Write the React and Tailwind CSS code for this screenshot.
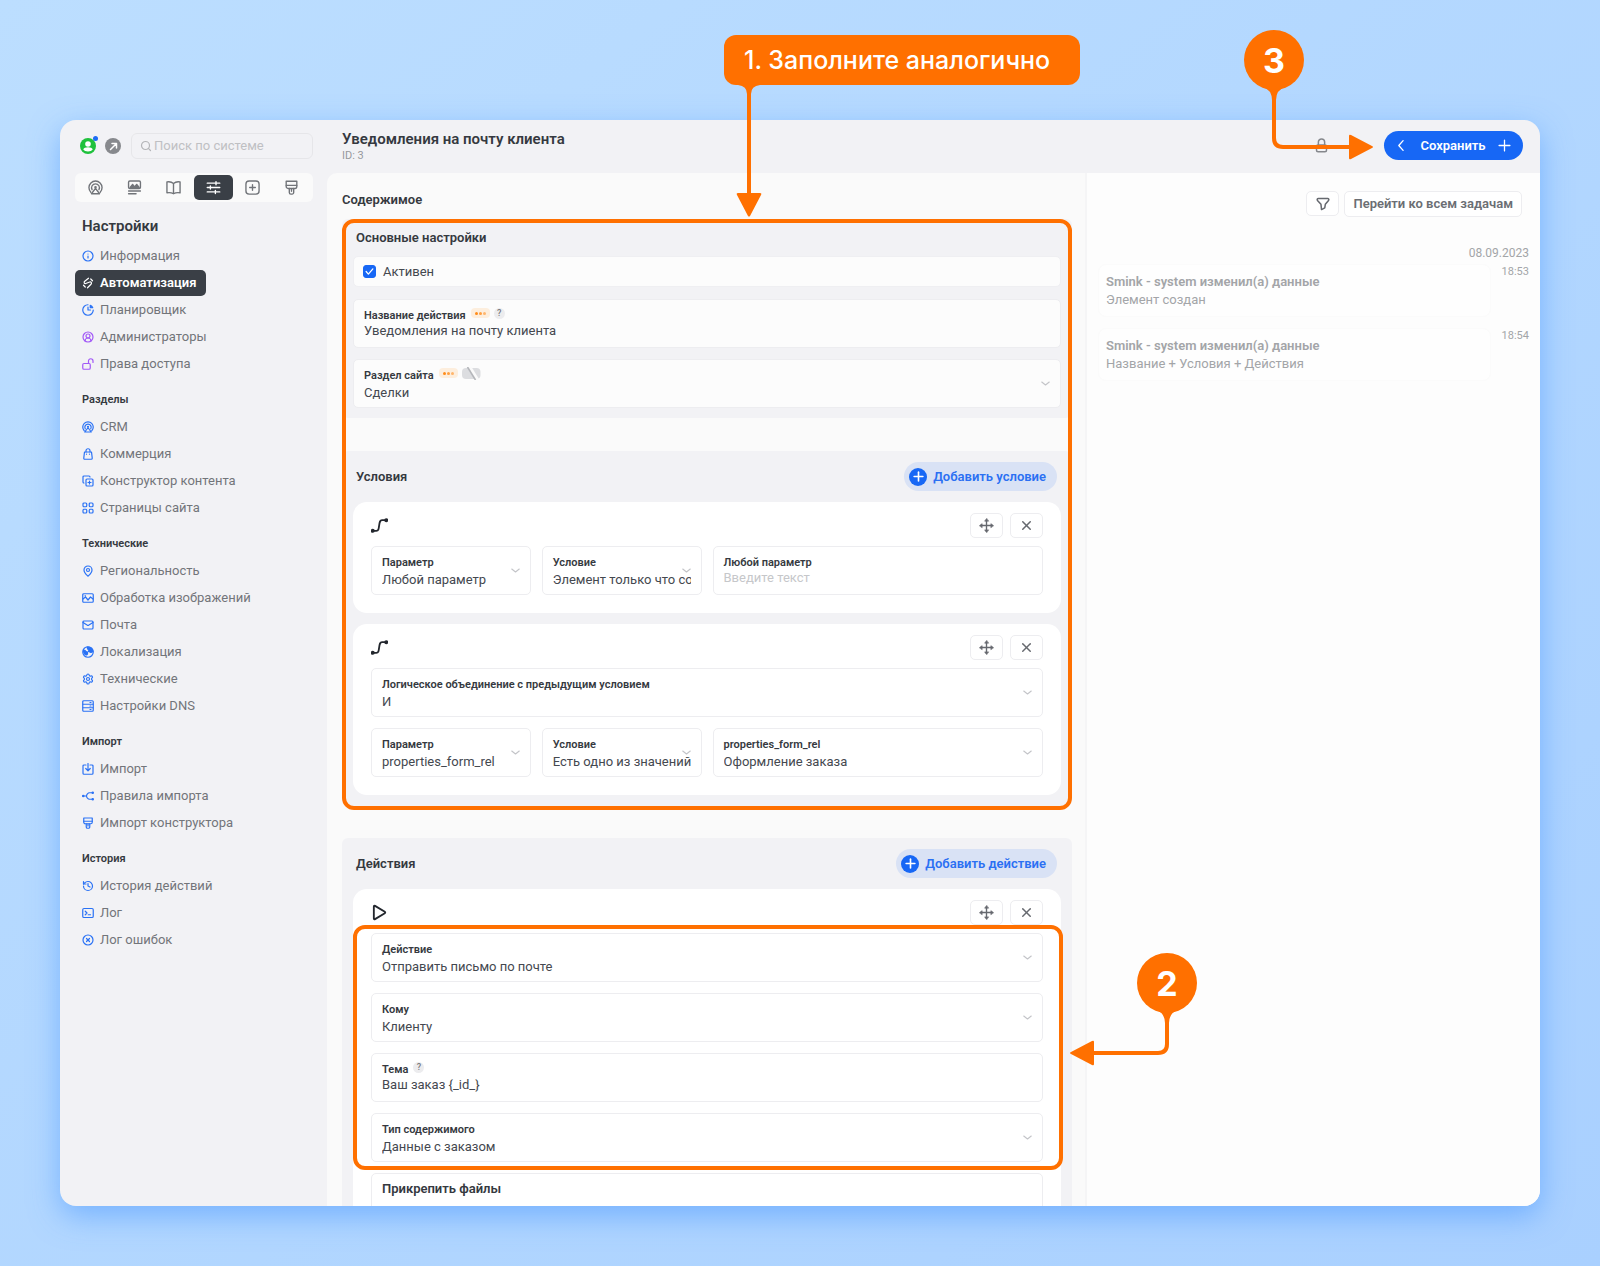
import React, { useId } from 'react';
import { CircleUserRound, CircleX, CopyPlus, History, Info, Mail, MapPin, Plus, Search, Settings, X } from 'lucide-react';

const Svg = ({ children, className = 'size-3', strokeWidth = 2.4 }) => (
  <svg
    className={className}
    viewBox="0 0 24 24"
    fill="none"
    stroke="currentColor"
    strokeWidth={strokeWidth}
    strokeLinecap="round"
    strokeLinejoin="round"
    aria-hidden="true"
  >
    {children}
  </svg>
);

const AutomationIcon = (props) => (
  <Svg {...props}>
    <path d="M13 2.500 5.500 8.500c-2.400 2-.8 5.500 2 4.500l8-3c3-1 4.600 2.500 2.500 4.500L11 21.500" />
    <path d="M3 16.500 6.500 20M17.500 4 21 7.500" />
  </Svg>
);

const PlannerIcon = (props) => (
  <Svg {...props}>
    <path d="M12 1.500A10.500 10.500 0 1 0 22.500 12M12 6v6h5" />
    <path d="M16.500 2.500a9 9 0 0 1 5 5h-5z" fill="currentColor" />
  </Svg>
);

const UnlockIcon = (props) => (
  <Svg {...props}>
    <rect x="1.500" y="11" width="15" height="11.500" rx="2.500" />
    <path d="M13 11V6a4.500 4.500 0 0 1 9 0v3" />
  </Svg>
);

const CrmIcon = (props) => (
  <Svg {...props}>
    <path d="M4.500 19.500a10.500 10.500 0 1 1 15 0" />
    <path d="M6.500 15.500a6.300 6.300 0 1 1 11 0" />
    <path d="M12 13.500 5.500 22h13z" />
    <circle cx="12" cy="11.500" r="1" />
  </Svg>
);

const BagIcon = (props) => (
  <Svg {...props}>
    <path d="M5 8h14l1.500 12.500a2 2 0 0 1-2 2h-13a2 2 0 0 1-2-2z" />
    <path d="M8 8V5.500a4 4 0 0 1 8 0V8M9 12v.5M15 12v.5" />
  </Svg>
);

const GridIcon = (props) => (
  <Svg {...props}>
    <rect x="2" y="2" width="7.500" height="7.500" rx="2" />
    <rect x="14.500" y="2" width="7.500" height="7.500" rx="2" />
    <rect x="2" y="14.500" width="7.500" height="7.500" rx="2" />
    <rect x="14.500" y="14.500" width="7.500" height="7.500" rx="2" />
  </Svg>
);

const ImageIcon = (props) => (
  <Svg {...props}>
    <rect x="1.500" y="3.500" width="21" height="17" rx="2" />
    <path d="m2 14 5-4 5 6 5-6 5 4M6 7.500h1" />
  </Svg>
);

const GlobeIcon = (props) => (
  <Svg {...props}>
    <circle cx="12" cy="12" r="10.500" />
    <path d="M3 8c3 0 4 1 5 3l3 1v4l-2 2c-4-1-6-4-6-10zM10 2c1 3 1 5 4 6l-1 3 5 2 4-2c-.5-5-5-9.500-12-9z" fill="currentColor" />
  </Svg>
);

const DnsIcon = (props) => (
  <Svg {...props}>
    <rect x="1.500" y="1.500" width="21" height="21" rx="2" />
    <path d="M2 8.500h20M2 15.500h20M16 5h2M16 12h2M16 19h2" />
  </Svg>
);

const ImportIcon = (props) => (
  <Svg {...props}>
    <path d="M8 4H4a2 2 0 0 0-2 2v14.500a2 2 0 0 0 2 2h16a2 2 0 0 0 2-2V6a2 2 0 0 0-2-2h-4" />
    <path d="M12 1v14M7.500 11l4.500 4.500 4.500-4.500" />
  </Svg>
);

const SplitIcon = (props) => (
  <Svg {...props}>
    <path d="M2 12h7M21 5.500h-6c-3 0-6 3.500-6 6.500s3 6.500 6 6.500h6" />
    <circle cx="2.500" cy="12" r="1.300" fill="currentColor" />
    <circle cx="21.500" cy="5.500" r="1.300" fill="currentColor" />
    <circle cx="21.500" cy="18.500" r="1.300" fill="currentColor" />
  </Svg>
);

const BrushIcon = (props) => (
  <Svg {...props}>
    <path d="M3.500 2h17v8.500a3 3 0 0 1-3 3h-11a3 3 0 0 1-3-3z" />
    <path d="M3.500 8.500h17M8.500 13.500V20a2.500 2.500 0 0 0 2.500 2.500h2a2.500 2.500 0 0 0 2.500-2.500v-6.500M12 14v4" />
  </Svg>
);

const TerminalIcon = (props) => (
  <Svg {...props}>
    <rect x="1.500" y="3" width="21" height="18" rx="2.500" />
    <path d="m6.500 8.500 3.500 3.500-3.500 3.500M12.500 15.500h4.500" />
  </Svg>
);

const NewsIcon = (props) => (
  <Svg {...props}>
    <rect x="2.500" y="1.500" width="19" height="12" rx="2" />
    <path d="m5 12 4-5 3 4 3.500-4 4 5z" fill="currentColor" />
    <path d="M2.500 17.500h19M2.500 22h12" />
  </Svg>
);

const BookIcon = (props) => (
  <Svg {...props}>
    <path d="M12 5.500C9 2.800 5.500 2.300 1.500 3v17.500c4-.7 7.500-.2 10.500 1.500 3-1.700 6.500-2.200 10.500-1.500V3C18.500 2.300 15 2.800 12 5.500zM12 5.500V21" />
  </Svg>
);

const SlidersIcon = (props) => (
  <Svg {...props}>
    <path d="M2 5h20M2 12h20M2 19h20M16 2.500v5M7 9.500v5M15 16.500v5" />
  </Svg>
);

const AddBoxIcon = (props) => (
  <Svg {...props}>
    <rect x="1.500" y="1.500" width="21" height="21" rx="5" />
    <path d="M12 7.500v9M7.500 12h9" />
  </Svg>
);

const LockIcon = (props) => (
  <Svg {...props}>
    <rect x="4" y="11" width="16" height="11" rx="2.500" />
    <path d="M7 11V6.500a5 5 0 0 1 10 0V11" />
  </Svg>
);

const FilterIcon = (props) => (
  <Svg {...props}>
    <path d="M4 2.500h16a2 2 0 0 1 1.500 3.300L16 12.500l-1 6-5.500 3L8.500 12.500 2.500 5.800A2 2 0 0 1 4 2.500z" />
  </Svg>
);

const MoveIcon = (props) => (
  <Svg {...props}>
    <path d="M12 3v18M3 12h18" />
    <path d="M12 1 9 5h6zM12 23l-3-4h6zM1 12l4-3v6zM23 12l-4-3v6z" fill="currentColor" strokeWidth="1" />
  </Svg>
);

const RouteIcon = (props) => (
  <Svg {...props}>
    <path d="M3 19.500h4.500c3 0 3.300-2 4-7.500s1.200-7.500 4-7.500H21" />
    <circle cx="2.500" cy="19.500" r="1.500" fill="currentColor" />
    <circle cx="21.500" cy="4.500" r="1.500" fill="currentColor" />
  </Svg>
);

const PlayIcon = (props) => (
  <Svg {...props}>
    <path d="M4 3.500v17c0 1 .8 1.400 1.700.900l13.800-8.400c.8-.5.800-1.500 0-2L5.700 2.600C4.800 2.100 4 2.500 4 3.500z" />
  </Svg>
);

const tabs = [
  { label: 'CRM', icon: CrmIcon },
  { label: 'Контент', icon: NewsIcon },
  { label: 'Справочники', icon: BookIcon },
  { label: 'Настройки', icon: SlidersIcon, active: true },
  { label: 'Добавить', icon: AddBoxIcon },
  { label: 'Оформление', icon: BrushIcon },
];

const groups = [
  {
    items: [
      { label: 'Информация', icon: Info },
      { label: 'Автоматизация', icon: AutomationIcon, active: true },
      { label: 'Планировщик', icon: PlannerIcon },
      { label: 'Администраторы', icon: CircleUserRound, purple: true },
      { label: 'Права доступа', icon: UnlockIcon, purple: true },
    ],
  },
  {
    title: 'Разделы',
    items: [
      { label: 'CRM', icon: CrmIcon },
      { label: 'Коммерция', icon: BagIcon },
      { label: 'Конструктор контента', icon: CopyPlus },
      { label: 'Страницы сайта', icon: GridIcon },
    ],
  },
  {
    title: 'Технические',
    items: [
      { label: 'Региональность', icon: MapPin },
      { label: 'Обработка изображений', icon: ImageIcon },
      { label: 'Почта', icon: Mail },
      { label: 'Локализация', icon: GlobeIcon },
      { label: 'Технические', icon: Settings },
      { label: 'Настройки DNS', icon: DnsIcon },
    ],
  },
  {
    title: 'Импорт',
    items: [
      { label: 'Импорт', icon: ImportIcon },
      { label: 'Правила импорта', icon: SplitIcon },
      { label: 'Импорт конструктора', icon: BrushIcon },
    ],
  },
  {
    title: 'История',
    items: [
      { label: 'История действий', icon: History },
      { label: 'Лог', icon: TerminalIcon },
      { label: 'Лог ошибок', icon: CircleX },
    ],
  },
];

const events = [
  { time: '18:53', title: 'Smink - system изменил(а) данные', text: 'Элемент создан' },
  { time: '18:54', title: 'Smink - system изменил(а) данные', text: 'Название + Условия + Действия' },
];

const SidebarItem = ({ label, icon: Icon, active, purple }) => (
  <li className="flex">
    <a
      href="#"
      className={
        active
          ? 'flex h-[26px] items-center gap-[6px] rounded-[5px] bg-[#3a3f46] pr-[10px] pl-[7px] text-[13px] font-semibold text-white'
          : 'flex h-[26px] items-center gap-[6px] px-[7px] text-[13px] text-[#72757a]'
      }
    >
      <span className={active ? 'text-white' : purple ? 'text-[#a259f7]' : 'text-[#2a72f5]'}>
        <Icon className="block size-3" strokeWidth={2.4} />
      </span>
      {label}
    </a>
  </li>
);

const Sidebar = () => (
  <aside className="w-[267px] shrink-0 pt-[13px] pr-[14px] pl-[15px]">
    <div className="flex items-center pl-[5px]">
      <button type="button" aria-label="Профиль" className="relative size-4 rounded-full bg-[#1fc13c] text-white">
        <svg viewBox="0 0 16 16" className="size-4" fill="currentColor" aria-hidden="true">
          <circle cx="8" cy="6" r="2.800" />
          <path d="M3.300 11.500c.5-3 8.900-3 9.400 0-1.500 2.600-7.900 2.600-9.400 0z" />
        </svg>
        <span className="absolute -top-0.5 -right-0.5 size-[5px] rounded-full bg-[#1c6cf5]" />
      </button>
      <button type="button" aria-label="Открыть сайт" className="ml-[9px] flex size-4 items-center justify-center rounded-full bg-[#87898d] text-white">
        <Svg className="size-[9px]" strokeWidth={4}>
          <path d="M4 20 20 4M8 4h12v12" />
        </Svg>
      </button>
      <label className="ml-[10px] flex h-[26px] flex-1 items-center gap-0.5 rounded-md border border-[#e6e6e9] px-2 text-[#b4b5b8]">
        <Search className="size-3 shrink-0" strokeWidth={2.4} />
        <input
          type="search"
          aria-label="Поиск по системе"
          placeholder="Поиск по системе"
          className="w-full min-w-0 bg-transparent text-[13px] outline-none placeholder:text-[#bfc0c3]"
        />
      </label>
    </div>

    <nav className="mt-[14px] grid h-[29px] grid-cols-6 rounded-md bg-[#fafafa] pl-px pr-0.5">
      {tabs.map(({ label, icon: Icon, active }) => (
        <button
          key={label}
          type="button"
          aria-label={label}
          className={
            active
              ? 'my-0.5 flex items-center justify-center rounded-[5px] bg-[#3a3f46] text-white'
              : 'my-0.5 flex items-center justify-center text-[#717479]'
          }
        >
          <Icon className="size-[15px]" strokeWidth={2.2} />
        </button>
      ))}
    </nav>

    <h2 className="mt-[14px] ml-[7px] text-[15px] leading-5 font-semibold">Настройки</h2>
    {groups.map(({ title, items }, i) => (
      <React.Fragment key={i}>
        {title && <h3 className="mt-[13px] ml-[7px] text-[11px] leading-5 font-semibold">{title}</h3>}
        <ul className={title ? 'mt-1 flex flex-col gap-px' : 'mt-[7px] flex flex-col gap-px'}>
          {items.map((item) => (
            <SidebarItem key={item.label} {...item} />
          ))}
        </ul>
      </React.Fragment>
    ))}
  </aside>
);

const Dots = () => (
  <span className="flex h-[10px] w-[19px] items-center justify-center gap-px rounded bg-[#fdeedd]">
    <i className="size-[3px] rounded-full bg-[#ff8c1a]" />
    <i className="size-[3px] rounded-full bg-[#ff9f40]" />
    <i className="size-[3px] rounded-full bg-[#ffb56b]" />
  </span>
);

const Help = () => (
  <span className="flex size-[11px] items-center justify-center rounded-full bg-[#ececee] text-[9px] leading-none font-medium text-[#77797e]">?</span>
);

const Hidden = () => (
  <svg className="h-[13px] w-[19px]" viewBox="0 0 19 13" aria-hidden="true">
    <rect x="0" y="1" width="18.500" height="11" rx="4" fill="#dcdde0" />
    <path d="M7.500 0l8 13" stroke="#fafafa" strokeWidth="3.500" />
    <path d="M5.500 0l8 13" stroke="#b4b6ba" strokeWidth="1.600" />
  </svg>
);

const Field = ({ label, value, placeholder, select, badges, className = '' }) => {
  const id = useId();
  return (
    <div className={`relative h-[49px] rounded-[5px] border border-[#ededf0] px-[10px] pt-[7px] ${className}`}>
      <div className="flex h-4 items-start gap-[5px]">
        <label htmlFor={id} className="text-[11px] leading-[18px] font-semibold whitespace-nowrap">
          {label}
        </label>
        {badges && <span className="flex h-3 items-center gap-1">{badges}</span>}
      </div>
      {select ? (
        <select id={id} className="block h-5 w-full appearance-none bg-transparent text-[13px] leading-5 text-[#44484f] outline-none">
          <option>{value}</option>
        </select>
      ) : (
        <input
          id={id}
          type="text"
          defaultValue={value}
          placeholder={placeholder}
          className="block h-4 w-full bg-transparent text-[13px] leading-4 text-[#44484f] outline-none placeholder:text-[#c6c7ca]"
        />
      )}
      {select && (
        <Svg className="pointer-events-none absolute top-[19px] right-[10px] size-[9px] text-[#c3c4c8]" strokeWidth={3}>
          <path d="m2 8 10 8 10-8" />
        </Svg>
      )}
    </div>
  );
};

const AddButton = ({ children }) => (
  <button type="button" className="flex h-[29px] items-center gap-[6px] rounded-full bg-[#d9e2f5] pr-[11px] pl-[5px] text-[13px] font-semibold text-[#2b70f3]">
    <span className="flex size-[18px] items-center justify-center rounded-full bg-[#1767f5] text-white">
      <Plus className="size-[15px]" strokeWidth={2.6} />
    </span>
    {children}
  </button>
);

const IconButton = ({ label, children }) => (
  <button type="button" aria-label={label} className="flex h-[25px] w-[33px] items-center justify-center rounded-[5px] border border-[#ededf0] bg-white text-[#66696f]">
    {children}
  </button>
);

const Panel = ({ title, action, children }) => (
  <section className="rounded-md bg-[#f2f2f5] p-[11px]">
    <div className="flex h-[29px] items-center justify-between pr-1 pl-[3px]">
      <h3 className="text-[13px] font-semibold">{title}</h3>
      {action}
    </div>
    <div className="mt-[11px] flex flex-col gap-[11px]">{children}</div>
  </section>
);

const Card = ({ icon: Icon, children }) => (
  <div className="rounded-[14px] bg-white px-[18px] pt-[11px] pb-[18px]">
    <div className="flex items-center gap-[7px]">
      <Icon className="mr-auto size-[17px] text-[#23272e]" strokeWidth={2.6} />
      <IconButton label="Переместить">
        <MoveIcon className="size-[15px]" strokeWidth={2.2} />
      </IconButton>
      <IconButton label="Удалить">
        <X className="size-[15px]" strokeWidth={2.4} />
      </IconButton>
    </div>
    <div className="mt-2 flex flex-col gap-[11px]">{children}</div>
  </div>
);

const Editor = () => (
  <main className="min-w-0 flex-1 rounded-tl-[10px] border-r-2 border-[#f5f5f6] bg-[#fafafa] pt-[17px] pr-[13px] pl-[15px]">
    <h2 className="text-[13px] leading-5 font-semibold">Содержимое</h2>

    <div className="relative mt-[9px]">
      <section className="rounded-md bg-[#f2f2f5] px-[11px] pt-[9px] pb-[10px]">
        <h3 className="pl-[3px] text-[13px] leading-5 font-semibold">Основные настройки</h3>
        <label className="mt-2 flex h-[31px] items-center gap-[7px] rounded-[5px] border border-[#efeff2] bg-[#fcfcfc] px-[9px] text-[13px] text-[#44484f]">
          <span className="relative size-[13px]">
            <input type="checkbox" defaultChecked className="block size-[13px] appearance-none rounded-[3px] border border-[#c3c4c8] checked:border-[#1767f5] checked:bg-[#1767f5]" />
            <Svg className="pointer-events-none absolute inset-[2px] size-[9px] text-white" strokeWidth={3.4}>
              <path d="m3 12 6 7L21 5" />
            </Svg>
          </span>
          Активен
        </label>
        <Field
          className="mt-3 bg-[#fcfcfc]"
          label="Название действия"
          value="Уведомления на почту клиента"
          badges={<><Dots /><Help /></>}
        />
        <Field className="mt-[11px] bg-[#fcfcfc]" label="Раздел сайта" value="Сделки" select badges={<><Dots /><Hidden /></>} />
      </section>

      <div className="mt-[33px]">
        <Panel title="Условия" action={<AddButton>Добавить условие</AddButton>}>
          <Card icon={RouteIcon}>
            <div className="grid grid-cols-4 gap-[11px]">
              <Field label="Параметр" value="Любой параметр" select />
              <Field label="Условие" value="Элемент только что создан" select />
              <Field className="col-span-2" label="Любой параметр" placeholder="Введите текст" />
            </div>
          </Card>
          <Card icon={RouteIcon}>
            <Field label="Логическое объединение с предыдущим условием" value="И" select />
            <div className="grid grid-cols-4 gap-[11px]">
              <Field label="Параметр" value="properties_form_rel" select />
              <Field label="Условие" value="Есть одно из значений" select />
              <Field className="col-span-2" label="properties_form_rel" value="Оформление заказа" select />
            </div>
          </Card>
        </Panel>
      </div>
      <div className="pointer-events-none absolute inset-x-0 top-0 -bottom-1 rounded-xl border-4 border-[#ff7000]" />
    </div>

    <div className="mt-8">
      <Panel title="Действия" action={<AddButton>Добавить действие</AddButton>}>
        <Card icon={PlayIcon}>
          <div className="relative flex flex-col gap-[11px]">
            <Field label="Действие" value="Отправить письмо по почте" select />
            <Field label="Кому" value="Клиенту" select />
            <Field label="Тема" value="Ваш заказ {_id_}" badges={<Help />} />
            <Field label="Тип содержимого" value="Данные с заказом" select />
            <div className="pointer-events-none absolute -inset-y-2 -right-5 -left-[18px] rounded-xl border-4 border-[#ff7000]" />
          </div>
          <div className="h-24 rounded-[5px] border border-[#ededf0] px-[10px] pt-[5px] text-[13px] leading-5 font-semibold">
            Прикрепить файлы
          </div>
        </Card>
      </Panel>
    </div>
  </main>
);

const Activity = () => (
  <section className="w-[453px] shrink-0 bg-[#fdfdfd] pt-[18px] pr-[11px] pl-[11px]">
    <div className="flex justify-end gap-[5px] pr-[7px]">
      <IconButton label="Фильтр">
        <FilterIcon className="size-[14px]" strokeWidth={2.6} />
      </IconButton>
      <button type="button" className="h-[26px] rounded-[5px] border border-[#ededf0] bg-white px-2 text-[13px] font-semibold text-[#6b6e73]">
        Перейти ко всем задачам
      </button>
    </div>
    <p className="mt-[26px] text-right text-[12px] leading-5 text-[#a3a5a8]">08.09.2023</p>
    <ul className="mt-px flex flex-col gap-[11px]">
      {events.map(({ time, title, text }) => (
        <li key={time} className="flex">
          <div className="h-[53px] flex-1 rounded-lg border border-[#fbfbfb] bg-[#fefefe] px-[7px] pt-2 text-[13px] leading-[18px]">
            <p className="font-semibold text-[#a3a5a8]">{title}</p>
            <p className="text-[#a3a5a8]">{text}</p>
          </div>
          <time className="w-[38px] text-right text-[11px] leading-4 text-[#a3a5a8]">{time}</time>
        </li>
      ))}
    </ul>
  </section>
);

const Header = () => (
  <header className="flex h-[53px] shrink-0 items-start pt-[11px] pr-[17px] pl-[15px]">
    <div className="mr-auto">
      <h1 className="text-[15px] leading-[17px] font-semibold">Уведомления на почту клиента</h1>
      <p className="text-[11px] leading-4 text-[#97999d]">ID: 3</p>
    </div>
    <div className="flex items-center gap-[55px]">
      <LockIcon className="size-[15px] text-[#85878c]" strokeWidth={2.4} />
      <button type="button" className="flex h-[29px] w-[139px] items-center justify-between rounded-full bg-[#1767f5] pr-3 pl-[11px] text-[13px] font-semibold text-white">
        <Svg className="size-[13px]" strokeWidth={2.4}>
          <path d="m15 3-8 9 8 9" />
        </Svg>
        Сохранить
        <Svg className="size-[13px]" strokeWidth={2.4}>
          <path d="M12 2v20M2 12h20" />
        </Svg>
      </button>
    </div>
  </header>
);

// Numbered hints that lie over the window
const Callouts = () => (
  <div className="pointer-events-none absolute inset-0 font-[Inter,sans-serif] text-white">
    <div className="absolute top-[35px] left-[724px]">
      <div className="flex h-[50px] w-[356px] items-center rounded-xl bg-[#ff7000] pt-px pl-5 text-[25px] font-medium">
        1. Заполните аналогично
      </div>
      <svg className="ml-3 block h-[132px] w-[26px]" viewBox="0 0 26 132" fill="#ff7000" aria-hidden="true">
        <path d="M2 0h22q-9 1-9 9v99h9q2 0 1 2L14 131q-1 1-2 0L1 110q-1-2 1-2h9V9q0-8-9-9z" />
      </svg>
    </div>

    <div className="absolute top-[30px] right-[226px] w-[130px]">
      <div className="flex size-[60px] items-center justify-center rounded-full bg-[#ff7000] text-[34px] font-bold">3</div>
      <svg className="absolute top-[56px] left-0 h-[76px] w-[130px]" viewBox="0 0 130 76" aria-hidden="true">
        <path d="M18 0Q28 4 28 14h4Q32 4 42 0z" fill="#ff7000" />
        <path d="M30 10v42q0 9 9 9h68" fill="none" stroke="#ff7000" strokeWidth="4" />
        <path d="M105 50q0-2 2-1l21 11q2 1 0 2l-21 11q-2 1-2-1z" fill="#ff7000" />
      </svg>
    </div>

    <div className="absolute top-[953px] right-[403px] flex w-[130px] justify-end">
      <div className="flex size-[60px] items-center justify-center rounded-full bg-[#ff7000] text-[34px] font-bold">2</div>
      <svg className="absolute top-[56px] left-0 h-[60px] w-[130px]" viewBox="0 0 130 60" aria-hidden="true">
        <path d="M88 0q10 4 10 14h4q0-10 10-14z" fill="#ff7000" />
        <path d="M100 10v25q0 9-9 9H26" fill="none" stroke="#ff7000" strokeWidth="4" />
        <path d="M27 33q0-2-2-1L4 43q-2 1 0 2l21 11q2 1 2-1z" fill="#ff7000" />
      </svg>
    </div>
  </div>
);

export default function App() {
  return (
    <div className="relative flex h-screen flex-col overflow-hidden bg-linear-to-br from-[#bcdeff] to-[#a9d0ff] px-[60px] pt-[120px] pb-[60px] font-[Roboto,'Noto_Sans',sans-serif] text-[#353940]">
      <div className="flex min-h-0 flex-1 overflow-hidden rounded-[16px] bg-[#f2f2f5] shadow-[0_10px_30px_rgba(70,150,255,0.55)]">
        <Sidebar />
        <div className="flex min-w-0 flex-1 flex-col">
          <Header />
          <div className="flex min-h-0 flex-1">
            <Editor />
            <Activity />
          </div>
        </div>
      </div>
      <Callouts />
    </div>
  );
}
